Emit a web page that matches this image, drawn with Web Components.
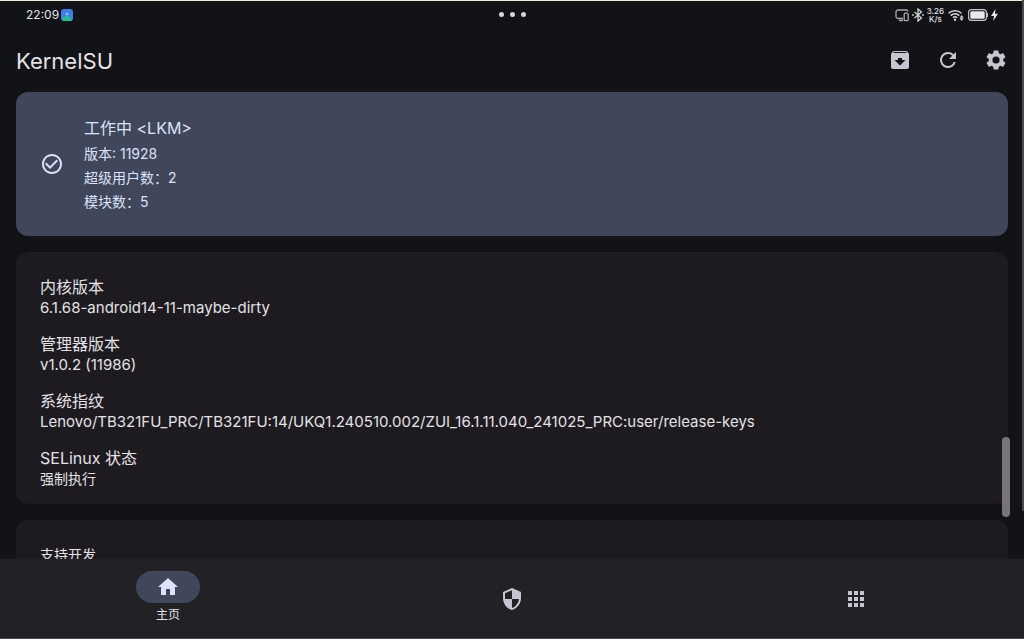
<!DOCTYPE html>
<html lang="zh-CN">
<head>
<meta charset="utf-8">
<meta name="viewport" content="width=device-width, initial-scale=1">
<title>KernelSU</title>
<style>
  html, body { height: 100%; margin: 0; background: #121317; }
  body {
    font-family: Inter, "Noto Sans CJK SC", sans-serif;
    color: #e3e2e6;
    --surface: #121317;
    --primary: #40475a;
    --on-primary: #dbe2f9;
    --card: #1e1b20;
    --nav: #222126;
    --icon: #c6c6d0;
  }
</style>
</head>
<body>
<ksu-app></ksu-app>
<script>
const ICONS = {
  archive: 'M20.54 5.23l-1.39-1.68C18.88 3.21 18.47 3 18 3H6c-.47 0-.88.21-1.16.55L3.46 5.23C3.17 5.57 3 6.02 3 6.5V19c0 1.1.9 2 2 2h14c1.1 0 2-.9 2-2V6.5c0-.48-.17-.93-.46-1.27zM12 17.5L6.5 12H10v-2h4v2h3.5L12 17.5zM5.12 5l.81-1h12l.94 1H5.12z',
  refresh: 'M17.65 6.35A7.96 7.96 0 0 0 12 4a8 8 0 1 0 7.73 10h-2.08A6 6 0 1 1 12 6c1.66 0 3.14.69 4.22 1.78L13 11h7V4l-2.35 2.35z',
  settings: 'M19.14 12.94c.04-.3.06-.61.06-.94 0-.32-.02-.64-.07-.94l2.03-1.58a.49.49 0 0 0 .12-.61l-1.92-3.32a.488.488 0 0 0-.59-.22l-2.39.96c-.5-.38-1.03-.7-1.62-.94l-.36-2.54a.484.484 0 0 0-.48-.41h-3.84c-.24 0-.43.17-.47.41l-.36 2.54c-.59.24-1.13.57-1.62.94l-2.39-.96c-.22-.08-.47 0-.59.22L2.74 8.87c-.12.21-.08.47.12.61l2.03 1.58c-.05.3-.09.63-.09.94s.02.64.07.94l-2.03 1.58a.49.49 0 0 0-.12.61l1.92 3.32c.12.22.37.29.59.22l2.39-.96c.5.38 1.03.7 1.62.94l.36 2.54c.05.24.24.41.48.41h3.84c.24 0 .44-.17.47-.41l.36-2.54c.59-.24 1.13-.56 1.62-.94l2.39.96c.22.08.47 0 .59-.22l1.92-3.32c.12-.22.07-.47-.12-.61l-2.01-1.58zM12 15.6A3.6 3.6 0 1 1 12 8.4a3.6 3.6 0 0 1 0 7.2z',
  check: 'M16.59 7.58L10 14.17l-3.59-3.58L5 12l5 5 8-8zM12 2C6.48 2 2 6.48 2 12s4.48 10 10 10 10-4.48 10-10S17.52 2 12 2zm0 18c-4.42 0-8-3.58-8-8s3.58-8 8-8 8 3.58 8 8-3.58 8-8 8z',
  home: 'M10 20v-6h4v6h5v-8h3L12 3 2 12h3v8z',
  shield: 'M12 1L3 5v6c0 5.55 3.84 10.74 9 12 5.16-1.26 9-6.45 9-12V5l-9-4zm0 10.99h7c-.53 4.12-3.28 7.79-7 8.94V12H5V6.3l7-3.11v8.8z',
  apps: 'M4 8h4V4H4v4zm6 12h4v-4h-4v4zm-6 0h4v-4H4v4zm0-6h4v-4H4v4zm6 0h4v-4h-4v4zm6-10v4h4V4h-4zm-6 4h4V4h-4v4zm6 6h4v-4h-4v4zm0 6h4v-4h-4v4z'
};

const define = (name, render) => customElements.define(name, class extends HTMLElement {
  connectedCallback() {
    if (this.shadowRoot) return;
    this.attachShadow({ mode: 'open' }).innerHTML = render(this);
  }
});

define('ksu-icon', el => `
  <style>
    :host { display: block; width: 24px; height: 24px; }
    svg { display: block; width: 100%; height: 100%; fill: currentColor; }
  </style>
  <svg viewBox="0 0 24 24" aria-hidden="true"><path d="${ICONS[el.getAttribute('name')]}"/></svg>`);

define('status-bar', () => `
  <style>
    :host {
      display: grid; grid-template-columns: 1fr auto 1fr; align-items: center;
      box-sizing: border-box; height: 28px; padding: 0 26px;
      border-top: 1px solid #ecead6; font-size: 12px; line-height: 16px;
    }
    .left, .dots, .right { display: flex; align-items: center; }
    .left { gap: 2px; }
    .dots { gap: 6px; }
    .dots i { width: 5px; height: 5px; border-radius: 50%; background: #d6d6d8; }
    .right { justify-content: flex-end; gap: 3px; }
    .rate { font-size: 8px; line-height: 8px; font-weight: 500; text-align: center; }
    svg { display: block; }
  </style>
  <div class="left"><span>22:09</span>
    <svg width="12" height="12" viewBox="0 0 12 12"><rect width="12" height="12" rx="3" fill="#3f7df0"/><path d="M1 11c1-3 3-4 5-4s4 1 5 4q-1 1-2 1H3q-1 0-2-1z" fill="#1fc28a"/><circle cx="6" cy="5" r="1.5" fill="#9cb9d8"/></svg>
  </div>
  <div class="dots"><i></i><i></i><i></i></div>
  <div class="right">
    <svg width="14" height="14" viewBox="0 0 14 14" fill="none" stroke="#a9a9ad" stroke-width="1.3"><path d="M8 10.5H3a2 2 0 0 1-2-2V4a2 2 0 0 1 2-2h8a2 2 0 0 1 2 1.4M4 12.5h4"/><rect x="9.2" y="5.2" width="4" height="7.4" rx="1.2"/></svg>
    <svg width="12" height="14" viewBox="0 0 12 14" fill="none" stroke="#d4d4d6" stroke-width="1.3"><path d="M2.5 4l7 6L6 13V1l3.500 3-7 6"/><path d="M1 6v2M11 6v2" /></svg>
    <div class="rate">3.26<br>K/s</div>
    <svg width="18" height="14" viewBox="0 0 18 14" fill="none" stroke="#d4d4d6" stroke-width="1.5"><path d="M1.500 5.200a9.500 9.500 0 0 1 13 0M3.700 7.600a6.200 6.200 0 0 1 8.600 0M5.900 9.800a3 3 0 0 1 4.200 0"/><circle cx="8" cy="11.800" r="1.200" fill="#d4d4d6" stroke="none"/><path d="M12.600 9.800L14.600 7l2 2.800zM12.600 10.200l2 2.800 2-2.800z" fill="#d4d4d6" stroke="none"/></svg>
    <svg width="20" height="12" viewBox="0 0 20 12"><rect x=".6" y=".6" width="17.800" height="10.800" rx="3" fill="none" stroke="#c9c9cb" stroke-width="1.100"/><rect x="2.300" y="2.300" width="14.400" height="7.400" rx="1.500" fill="#e8e8ea"/><path d="M19.400 4v4" stroke="#c9c9cb" stroke-width="1.100"/></svg>
    <svg width="7" height="12" viewBox="0 0 7 12"><path d="M4.500 0L0 7h3l-.8 5L7 4.700H4z" fill="#e8e8ea"/></svg>
  </div>`);

define('top-bar', () => `
  <style>
    :host { display: flex; align-items: center; height: 64px; padding: 0 4px 0 16px; }
    h1 { flex: 1; margin: 0; padding-top: 2px; font-size: 22px; line-height: 28px; font-weight: 400; }
  </style>
  <h1><slot></slot></h1>
  <slot name="action"></slot>`);

define('icon-button', el => `
  <style>
    :host { display: block; }
    button { display: grid; place-items: center; width: 48px; height: 48px; padding: 0; border: 0; border-radius: 50%; background: none; color: var(--icon); }
  </style>
  <button type="button" aria-label="${el.getAttribute('label')}"><ksu-icon name="${el.getAttribute('icon')}"></ksu-icon></button>`);

define('status-card', () => `
  <style>
    :host { display: flex; align-items: center; gap: 20px; padding: 22px 24px; border-radius: 12px; background: var(--primary); color: var(--on-primary); }
    .lines { display: flex; flex-direction: column; }
    h2 { margin: 0; font-size: 16px; line-height: 28px; font-weight: 400; }
    .lines div { display: flex; flex-direction: column; font-size: 14px; }
    ::slotted(p) { margin: 0; line-height: 24px; }
  </style>
  <ksu-icon name="check"></ksu-icon>
  <div class="lines"><h2><slot name="title"></slot></h2><div><slot></slot></div></div>`);

define('info-card', () => `
  <style>
    :host { display: flex; flex-direction: column; gap: 16px; padding: 24px 24px 16px; border-radius: 12px; background: var(--card); }
  </style>
  <slot></slot>`);

define('info-item', el => `
  <style>
    :host { display: block; }
    h3 { margin: 0; font-size: 16px; line-height: 22px; font-weight: 400; }
    p { margin: 0; font-size: 14px; line-height: 19px; overflow-wrap: anywhere; }
    :host([latin]) p { font-size: 15px; }
    :host([compact]) h3 { font-size: 14px; }
  </style>
  <h3>${el.getAttribute('label')}</h3>
  <p><slot></slot></p>`);

define('nav-item', el => `
  <style>
    :host { display: flex; flex: 1; }
    a { flex: 1; display: flex; flex-direction: column; align-items: center; justify-content: center; gap: 4px; color: var(--icon); text-decoration: none; font-size: 12px; line-height: 16px; }
    .pill { display: grid; place-items: center; width: 64px; height: 32px; border-radius: 16px; }
    :host([selected]) .pill { background: var(--primary); color: var(--on-primary); }
    :host([selected]) a { justify-content: flex-start; padding-top: 12px; color: #e3e2e6; }
  </style>
  <a href="#${el.getAttribute('icon')}" aria-label="${el.getAttribute('label')}">
    <span class="pill"><ksu-icon name="${el.getAttribute('icon')}"></ksu-icon></span><slot></slot>
  </a>`);

define('nav-bar', () => `
  <style>
    :host { display: block; background: var(--nav); }
    nav { display: flex; gap: 8px; box-sizing: border-box; height: 80px; border-bottom: 1px solid #4b4b4d; }
  </style>
  <nav><slot></slot></nav>`);

define('scroll-area', () => `
  <style>
    :host { display: block; position: relative; overflow: hidden; }
    .content { display: flex; flex-direction: column; gap: 16px; height: 100%; overflow-y: auto; scrollbar-width: none; padding: 0 16px; box-sizing: border-box; }
    .content ::slotted(*) { flex: none; }
    .thumb { position: absolute; right: 14px; bottom: 42px; width: 8px; height: 80px; border-radius: 4px; background: #77757b; }
  </style>
  <div class="content"><slot></slot></div>
  <div class="thumb"></div>`);

define('ksu-app', () => `
  <style>
    :host { display: flex; flex-direction: column; height: 100vh; background: var(--surface); position: relative; }
    scroll-area { flex: 1; min-height: 0; }
    .edge { position: absolute; top: 0; right: 0; width: 2px; height: 80%; background: #4a4a48; }
  </style>
  <status-bar></status-bar>
  <top-bar>KernelSU
    <icon-button slot="action" icon="archive" label="安装"></icon-button>
    <icon-button slot="action" icon="refresh" label="重启"></icon-button>
    <icon-button slot="action" icon="settings" label="设置"></icon-button>
  </top-bar>
  <scroll-area>
    <status-card>
      <span slot="title">工作中 &lt;LKM&gt;</span>
      <p>版本: 11928</p>
      <p>超级用户数：2</p>
      <p>模块数：5</p>
    </status-card>
    <info-card>
      <info-item latin label="内核版本">6.1.68-android14-11-maybe-dirty</info-item>
      <info-item latin label="管理器版本">v1.0.2 (11986)</info-item>
      <info-item latin label="系统指纹">Lenovo/TB321FU_PRC/TB321FU:14/UKQ1.240510.002/ZUI_16.1.11.040_241025_PRC:user/release-keys</info-item>
      <info-item label="SELinux 状态">强制执行</info-item>
    </info-card>
    <info-card><info-item compact label="支持开发"></info-item></info-card>
  </scroll-area>
  <nav-bar>
    <nav-item icon="home" label="主页" selected>主页</nav-item>
    <nav-item icon="shield" label="超级用户"></nav-item>
    <nav-item icon="apps" label="模块"></nav-item>
  </nav-bar>
  <div class="edge"></div>`);
</script>
</body>
</html>
